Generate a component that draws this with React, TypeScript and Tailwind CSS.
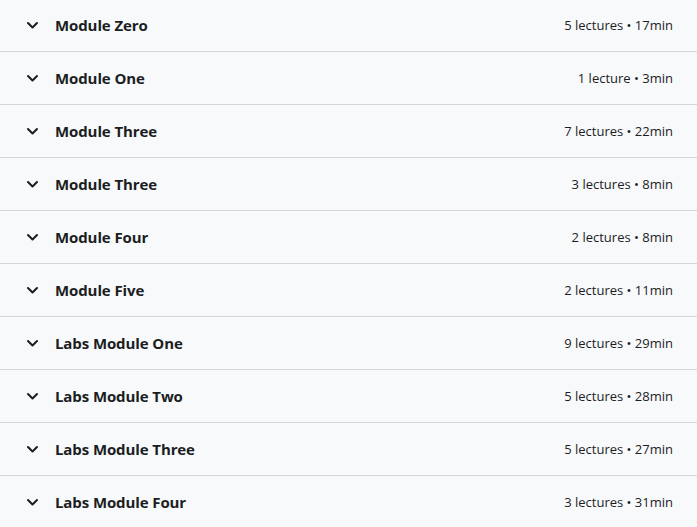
import React from "react";

type Module = {
  strTitulo: string;
  strResumen: string;
};

const arrModulos: Module[] = [
  { strTitulo: "Module Zero", strResumen: "5 lectures • 17min" },
  { strTitulo: "Module One", strResumen: "1 lecture • 3min" },
  { strTitulo: "Module Three", strResumen: "7 lectures • 22min" },
  { strTitulo: "Module Three", strResumen: "3 lectures • 8min" },
  { strTitulo: "Module Four", strResumen: "2 lectures • 8min" },
  { strTitulo: "Module Five", strResumen: "2 lectures • 11min" },
  { strTitulo: "Labs Module One", strResumen: "9 lectures • 29min" },
  { strTitulo: "Labs Module Two", strResumen: "5 lectures • 28min" },
  { strTitulo: "Labs Module Three", strResumen: "5 lectures • 27min" },
  { strTitulo: "Labs Module Four", strResumen: "3 lectures • 31min" },
];

const Chevron = () => (
  <svg viewBox="0 0 16 16" className="w-4 h-4 shrink-0" fill="none">
    <path
      d="M4 6l4.5 4.5L13 6"
      stroke="#1c1d1f"
      strokeWidth="2"
      strokeLinecap="round"
      strokeLinejoin="round"
    />
  </svg>
);

export default function App() {
  return (
    <div
      className="w-[697px] h-[527px] overflow-hidden bg-[#f7f9fa] text-[#1c1d1f]"
      style={{ fontFamily: "'Open Sans', 'Noto Sans', sans-serif" }}
    >
      <div className="-mt-px">
        {arrModulos.map((objModulo, index) => (
          <div
            key={index}
            className="h-[53px] flex items-center pl-6 pr-6 border-b border-[#d1d7dc]"
          >
            <Chevron />
            <span className="ml-[15px] text-[15px] font-bold tracking-[-0.1px]">
              {objModulo.strTitulo}
            </span>
            <span className="ml-auto pt-[2px] text-[13px]">
              {objModulo.strResumen}
            </span>
          </div>
        ))}
      </div>
    </div>
  );
}
